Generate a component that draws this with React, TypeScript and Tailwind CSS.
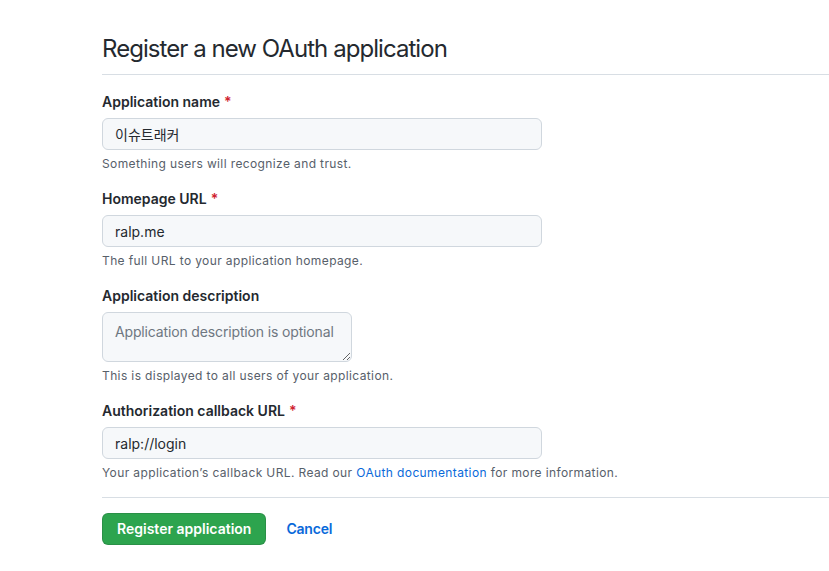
const font = { fontFamily: 'Inter, "Noto Sans CJK KR", "Liberation Sans", sans-serif' };

function Label({ text, required }: { text: string; required?: boolean }) {
  return (
    <label className="block h-5 text-sm leading-5 font-semibold text-[#24292f]">
      {text}
      {required && <span className="ml-1 text-[#cf222e]">*</span>}
    </label>
  );
}

function Hint({ children }: { children: React.ReactNode }) {
  return <p className="mt-[5px] text-xs leading-[18px] tracking-[0.38px] text-[#57606a]">{children}</p>;
}

function Field({ label, value, hint, required }: { label: string; value: string; hint: React.ReactNode; required?: boolean }) {
  return (
    <div className="mt-4">
      <Label text={label} required={required} />
      <input
        readOnly
        value={value}
        className="mt-1.5 block h-8 w-[440px] rounded-md border border-[#d0d7de] bg-[#f6f8fa] px-3 text-sm leading-5 text-[#24292f] outline-none"
        style={font}
      />
      <Hint>{hint}</Hint>
    </div>
  );
}

export default function App() {
  return (
    <div className="min-h-screen bg-white" style={font}>
      <div className="ml-[102px] pt-[31px]">
        <div className="border-b border-[#d8dee4] pb-[7px]">
          <h1 className="text-2xl leading-9 font-normal tracking-[-0.95px] text-[#24292f]">Register a new OAuth application</h1>
        </div>

        <div className="pt-px">
          <Field label="Application name" value="이슈트래커" hint="Something users will recognize and trust." required />
          <Field label="Homepage URL" value="ralp.me" hint="The full URL to your application homepage." required />

          <div className="mt-4">
            <Label text="Application description" />
            <textarea
              readOnly
              placeholder="Application description is optional"
              className="mt-1.5 block h-[50px] w-[250px] rounded-md border border-[#d0d7de] bg-[#f6f8fa] px-3 py-[9px] text-sm leading-5 tracking-[-0.15px] text-[#24292f] outline-none placeholder:text-[#6e7781]"
              style={font}
            />
            <Hint>This is displayed to all users of your application.</Hint>
          </div>

          <Field
            label="Authorization callback URL"
            value="ralp://login"
            required
            hint={
              <>
                Your application’s callback URL. Read our{" "}
                <a className="text-[#0969da]">OAuth documentation</a> for more information.
              </>
            }
          />
        </div>

        <div className="mt-[15px] border-t border-[#d8dee4] pt-[15px] flex items-center">
          <button className="h-8 rounded-md border border-[#1b1f24]/15 bg-[#2da44e] px-[14px] text-sm font-semibold text-white">
            Register application
          </button>
          <a className="ml-5 text-sm font-semibold tracking-[-0.2px] text-[#0969da]">Cancel</a>
        </div>
      </div>
    </div>
  );
}
